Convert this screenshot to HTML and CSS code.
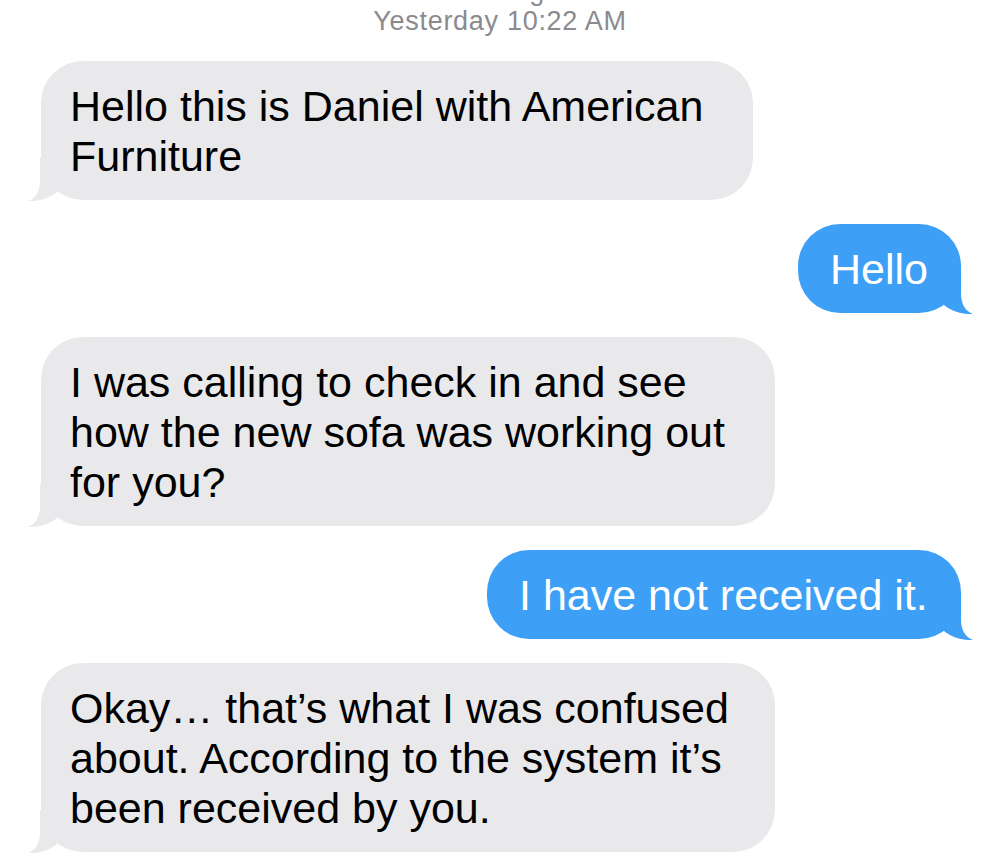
FILE: index.html
```html
<!DOCTYPE html>
<html lang="en">
<head>
<meta charset="utf-8">
<title>Messages</title>
<link rel="stylesheet" href="styles.css">
</head>
<body>
<main class="thread">
  <header class="meta">
    <div class="service">iMessage</div>
    <div class="stamp"><span class="day">Yesterday</span> 10:22 AM</div>
  </header>
  <section class="messages">
    <div class="msg them w-intro">
      <p>Hello this is Daniel with American Furniture</p>
      <svg class="tail" viewBox="-22 -42 35 43" aria-hidden="true"><path d="M-22 -42 L0 -42 L0 -20 C0 -9 4 -2 12 1 C3 1.5 -9 -1 -17 -8 Z"/></svg>
    </div>
    <div class="msg me w-hello">
      <p>Hello</p>
      <svg class="tail" viewBox="-22 -42 35 43" aria-hidden="true"><path d="M-22 -42 L0 -42 L0 -20 C0 -9 4 -2 12 1 C3 1.5 -9 -1 -17 -8 Z"/></svg>
    </div>
    <div class="msg them w-wide">
      <p>I was calling to check in and see how the new sofa was working out for you?</p>
      <svg class="tail" viewBox="-22 -42 35 43" aria-hidden="true"><path d="M-22 -42 L0 -42 L0 -20 C0 -9 4 -2 12 1 C3 1.5 -9 -1 -17 -8 Z"/></svg>
    </div>
    <div class="msg me w-received">
      <p>I have not received it.</p>
      <svg class="tail" viewBox="-22 -42 35 43" aria-hidden="true"><path d="M-22 -42 L0 -42 L0 -20 C0 -9 4 -2 12 1 C3 1.5 -9 -1 -17 -8 Z"/></svg>
    </div>
    <div class="msg them w-wide">
      <p>Okay… that’s what I was confused about. According to the system it’s been received by you.</p>
      <svg class="tail" viewBox="-22 -42 35 43" aria-hidden="true"><path d="M-22 -42 L0 -42 L0 -20 C0 -9 4 -2 12 1 C3 1.5 -9 -1 -17 -8 Z"/></svg>
    </div>
  </section>
</main>
</body>
</html>
```

FILE: styles.css
```css
html, body {
  margin: 0;
  padding: 0;
  background: #ffffff;
}

body {
  height: 868px;
  overflow: hidden;
  font-family: "Liberation Sans", Arial, sans-serif;
}

.thread {
  display: flex;
  flex-direction: column;
}

.meta {
  margin-top: -24px;
  text-align: center;
  color: #8a8a8f;
  font-size: 27px;
  line-height: 30px;
  letter-spacing: 0.7px;
}

.service,
.stamp {
  white-space: nowrap;
}

.messages {
  display: flex;
  flex-direction: column;
  gap: 24px;
  margin-top: 25px;
  padding: 0 39px 0 41px;
}

.msg {
  position: relative;
  box-sizing: border-box;
  border-radius: 42px;
  padding: 20px 22px 19px 29px;
  font-size: 43px;
  line-height: 50px;
}

.msg p {
  margin: 0;
}

.them {
  align-self: flex-start;
  background: #e9e9eb;
  color: #000000;
}

.me {
  align-self: flex-end;
  background: #3e9ff6;
  color: #ffffff;
  padding-left: 32px;
}

.w-intro { width: 712px; }
.w-wide { width: 734px; }
.w-hello { width: 163px; }
.w-received { width: 474px; }

.tail {
  position: absolute;
  bottom: -1px;
  right: -13px;
  width: 35px;
  height: 43px;
}

.me .tail {
  fill: #3e9ff6;
}

.them .tail {
  fill: #e9e9eb;
  right: auto;
  left: -14px;
  transform: scaleX(-1);
}
```
